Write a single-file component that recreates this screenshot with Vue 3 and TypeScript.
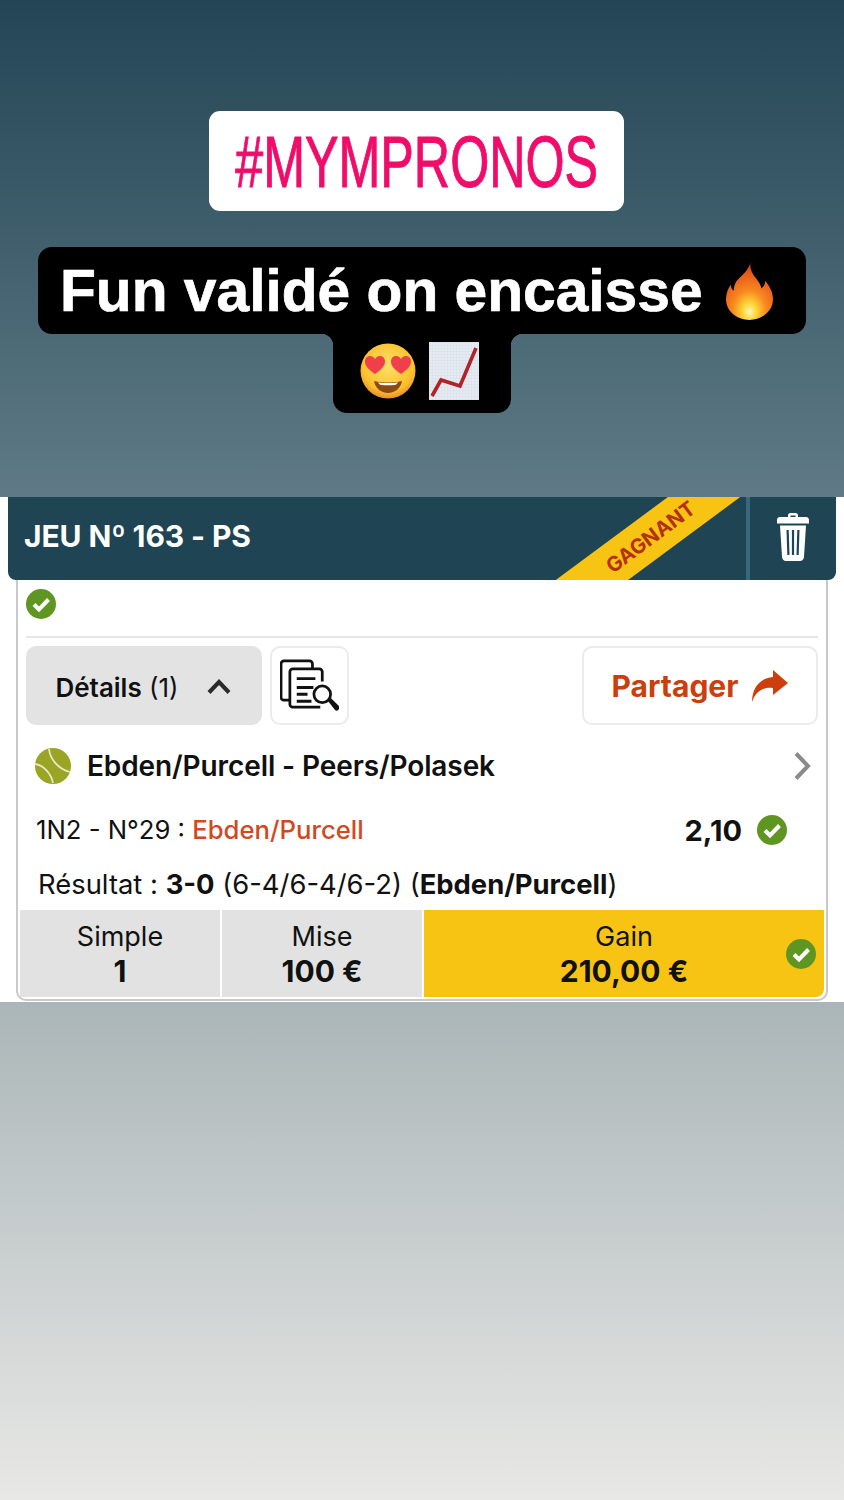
<script setup lang="ts">
const cells = [
  { label: 'Simple', value: '1' },
  { label: 'Mise', value: '100 €' },
]
</script>

<template>
  <div class="page">
    <section class="story">
      <div class="tag"><span class="tag-text">#MYMPRONOS</span></div>
      <div class="caption">
        <div class="line one">
          <span class="caption-text">Fun validé on encaisse</span>
          <svg class="flame" viewBox="0 0 48 60" width="47" height="59" aria-hidden="true">
            <defs>
              <radialGradient id="fl" cx="50%" cy="86%" r="85%">
                <stop offset="0" stop-color="#fff6c0" />
                <stop offset="0.16" stop-color="#ffd93a" />
                <stop offset="0.42" stop-color="#f98a1e" />
                <stop offset="1" stop-color="#d83a1a" />
              </radialGradient>
            </defs>
            <path fill="url(#fl)" d="M25 0c-1 7 1 12 6 18 3 4 5 7 5 10 3-2 4-5 4-8 5 6 8 12 8 19 0 12-11 21-24 21S0 51 0 39c0-6 2-11 5-15 0 3 1 5 3 6 0-4 1-7 3-10 5-6 13-11 14-20z" />
          </svg>
        </div>
        <div class="line two">
          <svg class="face" viewBox="0 0 56 56" width="56" height="56" aria-hidden="true">
            <defs>
              <radialGradient id="fc" cx="50%" cy="40%" r="62%">
                <stop offset="0" stop-color="#ffe169" />
                <stop offset="0.75" stop-color="#fbc02d" />
                <stop offset="1" stop-color="#e8892a" />
              </radialGradient>
            </defs>
            <circle cx="28" cy="28" r="27.500" fill="url(#fc)" />
            <path fill="#ef3f4a" transform="translate(5 13)" d="M10 18C3 13 0 10 0 5.500 0 2.200 2.300 0 5 0c2.200 0 4 1.200 5 3.200C11 1.200 12.800 0 15 0c2.700 0 5 2.200 5 5.500C20 10 17 13 10 18z" />
            <path fill="#ef3f4a" transform="translate(31 13)" d="M10 18C3 13 0 10 0 5.500 0 2.200 2.300 0 5 0c2.200 0 4 1.200 5 3.200C11 1.200 12.800 0 15 0c2.700 0 5 2.200 5 5.500C20 10 17 13 10 18z" />
            <path fill="#8a4a12" d="M14 38c9 2 19 2 28 0-1 7-7 12-14 12s-13-5-14-12z" />
            <path fill="#fff" d="M18 39.500c6 .8 14 .8 20 0-1 1.500-2 2.200-3 2.400-4 .5-10 .5-14 0-1-.2-2-.9-3-2.400z" />
          </svg>
          <svg class="chart" viewBox="0 0 50 58" width="50" height="58" aria-hidden="true">
            <defs>
              <pattern id="gr" width="3" height="3" patternUnits="userSpaceOnUse">
                <rect width="3" height="3" fill="#e6ebf1" />
                <path d="M3 0H0V3" fill="none" stroke="#ced6e0" stroke-width="0.6" />
              </pattern>
            </defs>
            <rect width="50" height="58" fill="url(#gr)" />
            <path fill="none" stroke="#b3212a" stroke-width="3.600" d="M3 54 12 38 31 44 47 6" />
          </svg>
        </div>
      </div>
    </section>

    <section class="sheet">
      <header class="bar">
        <h1 class="bar-title">JEU Nº 163 - PS</h1>
        <div class="ribbon"><span class="ribbon-text">GAGNANT</span></div>
        <div class="bin">
          <svg viewBox="0 0 32 48" width="32" height="48" aria-hidden="true">
            <path fill="#fff" d="M11 4V2.500C11 1 12 0 13.500 0h5C20 0 21 1 21 2.500V4h8c1.700 0 3 1.300 3 3v3.500H0V7c0-1.700 1.300-3 3-3h8zm2.500 0h5V2.500h-5V4z" />
            <path fill="#fff" fill-rule="evenodd" d="M3 12.500h26l-2 31.500c-.1 2.200-1.800 4-4 4H9c-2.200 0-3.900-1.800-4-4L3 12.500zM9.500 17l.8 25h2.200l-.8-25H9.500zm5.400 0v25h2.200V17h-2.200zm5.400 0-.8 25h2.200l.8-25h-2.200z" />
          </svg>
        </div>
      </header>

      <div class="card">
        <div class="status">
          <svg class="ok" viewBox="0 0 30 30" width="30" height="30" aria-hidden="true">
            <circle cx="15" cy="15" r="15" fill="#5f9622" />
            <path d="M8 15.500l5 5 9.500-10" fill="none" stroke="#fff" stroke-width="4" />
          </svg>
        </div>

        <div class="actions">
          <button class="details">
            <span class="details-label"><b>Détails</b> (1)</span>
            <svg viewBox="0 0 24 16" width="24" height="16" aria-hidden="true">
              <path d="M2 14.500 12 4l10 10.500" fill="none" stroke="#2b2b2b" stroke-width="4" />
            </svg>
          </button>
          <button class="docs">
            <svg viewBox="0 0 60 54" width="59" height="53" aria-hidden="true">
              <g fill="none" stroke="#111" stroke-width="2.800">
                <path d="M10 42H4a3 3 0 0 1-3-3V5a3 3 0 0 1 3-3h26a3 3 0 0 1 3 3v5" />
                <path d="M41 49H13a3 3 0 0 1-3-3V13a3 3 0 0 1 3-3h27a3 3 0 0 1 3 3v10" />
                <path d="M17 20h19M17 29h17M17 36h11M17 43h15" stroke-width="3" />
                <circle cx="43" cy="36" r="8.500" />
              </g>
              <path d="M49 43l3-3 8 8c1 1 1 2 0 3-1 2-3 2-4 1z" fill="#111" />
            </svg>
          </button>
          <button class="share">
            <span>Partager</span>
            <svg viewBox="0 0 36 32" width="36" height="32" aria-hidden="true">
              <path fill="#cc3f0c" d="M21 0l15 13-15 12v-7C11 17 4 21 0 32 0 18 8 8 21 7V0z" />
            </svg>
          </button>
        </div>

        <div class="match">
          <svg viewBox="0 0 36 36" width="36" height="36" aria-hidden="true">
            <circle cx="18" cy="18" r="18" fill="#9aa526" />
            <path d="M14 1c1 10 9 20 21 23M0 16c8 1 16 9 18 19" fill="none" stroke="#e6e8c8" stroke-width="1.800" />
          </svg>
          <span class="match-name">Ebden/Purcell - Peers/Polasek</span>
          <svg class="chev" viewBox="0 0 18 30" width="18" height="30" aria-hidden="true">
            <path d="M3 2.500 15 15 3 27.500" fill="none" stroke="#8a8a8a" stroke-width="4" />
          </svg>
        </div>

        <div class="pick">
          <span class="pick-text">1N2 - N°29 : <b>Ebden/Purcell</b></span>
          <span class="odds">2,10</span>
          <svg viewBox="0 0 30 30" width="30" height="30" aria-hidden="true">
            <circle cx="15" cy="15" r="15" fill="#5f9622" />
            <path d="M8 15.500l5 5 9.500-10" fill="none" stroke="#fff" stroke-width="4" />
          </svg>
        </div>

        <p class="result">Résultat : <b>3-0</b> (6-4/6-4/6-2) (<b>Ebden/Purcell</b>)</p>

        <div class="totals">
          <div v-for="c in cells" :key="c.label" class="cell">
            <span>{{ c.label }}</span>
            <b>{{ c.value }}</b>
          </div>
          <div class="cell gain">
            <span>Gain</span>
            <b>210,00 €</b>
            <svg class="gain-ok" viewBox="0 0 30 30" width="30" height="30" aria-hidden="true">
              <circle cx="15" cy="15" r="15" fill="#5f9622" />
              <path d="M8 15.500l5 5 9.500-10" fill="none" stroke="#fff" stroke-width="4" />
            </svg>
          </div>
        </div>
      </div>
    </section>
  </div>
</template>

<style>
html,
body {
  margin: 0;
}
</style>

<style scoped>
.page {
  width: 844px;
  height: 1500px;
  overflow: hidden;
  display: flex;
  flex-direction: column;
  background: linear-gradient(180deg, #234555 0%, #5f7a86 33%, #abb6b8 67%, #e8e8e6 100%);
  font-family: Inter, "Liberation Sans", sans-serif;
  color: #111;
}
.story {
  height: 497px;
  box-sizing: border-box;
  padding-top: 111px;
  display: flex;
  flex-direction: column;
  align-items: center;
  flex: none;
}
.tag {
  width: 415px;
  height: 100px;
  margin-right: 11px;
  background: #fff;
  border-radius: 11px;
  display: flex;
  align-items: center;
  justify-content: center;
}
.tag-text {
  font-family: "Liberation Sans", sans-serif;
  font-size: 73px;
  line-height: 1;
  color: #f00d6a;
  transform: scaleX(0.688);
  white-space: nowrap;
  -webkit-text-stroke: 1px #f00d6a;
}
.caption {
  margin-top: 36px;
  display: flex;
  flex-direction: column;
  align-items: center;
}
.line {
  background: #000;
  color: #fff;
  display: flex;
  align-items: center;
  font-family: "Liberation Sans", sans-serif;
  font-weight: 700;
}
.one {
  width: 768px;
  height: 87px;
  box-sizing: border-box;
  border-radius: 14px;
  padding-left: 22px;
  font-size: 58.700px;
  gap: 23px;
  white-space: nowrap;
}
.caption-text {
  -webkit-text-stroke: 0.7px #fff;
}
.two {
  width: 178px;
  height: 79px;
  box-sizing: border-box;
  border-radius: 0 0 14px 14px;
  justify-content: center;
  gap: 13px;
  padding: 0 5px 6px 0;
  position: relative;
}
.two::before,
.two::after {
  content: "";
  position: absolute;
  top: 0;
  width: 12px;
  height: 12px;
}
.two::before {
  left: -12px;
  background: radial-gradient(circle at 0 100%, transparent 12px, #000 12.500px);
}
.two::after {
  right: -12px;
  background: radial-gradient(circle at 100% 100%, transparent 12px, #000 12.500px);
}
.sheet {
  height: 505px;
  flex: none;
  background: #fff;
  box-sizing: border-box;
  padding: 0 8px;
}
.bar {
  height: 83px;
  background: #1f4454;
  border-radius: 0 0 8px 8px;
  position: relative;
  overflow: hidden;
  display: flex;
  align-items: center;
  justify-content: space-between;
  color: #fff;
}
.bar-title {
  margin: 0 0 5px 16px;
  font-size: 30px;
  font-weight: 700;
  letter-spacing: -0.1px;
}
.ribbon {
  position: absolute;
  left: 520px;
  top: 20px;
  width: 240px;
  height: 43px;
  background: #f8c413;
  transform: rotate(-36.500deg);
  display: flex;
  align-items: center;
  justify-content: center;
  padding: 0 0 0 6px;
  box-sizing: border-box;
}
.ribbon-text {
  color: #b5300f;
  font-size: 20.500px;
  line-height: 24px;
  font-weight: 700;
}
.bin {
  width: 90px;
  height: 100%;
  box-sizing: border-box;
  border-left: 4px solid #39687e;
  padding-bottom: 4px;
  display: flex;
  align-items: center;
  justify-content: center;
  position: relative;
}
.card {
  margin: 0 8px;
  height: 421px;
  box-sizing: border-box;
  border: 2px solid #c9c9c9;
  border-top: 0;
  border-radius: 0 0 10px 10px;
  padding: 0 2px;
  display: flex;
  flex-direction: column;
}
.status {
  height: 58px;
  margin: 0 6px;
  box-sizing: border-box;
  border-bottom: 2px solid #e5e5e5;
  display: flex;
  align-items: center;
  padding-bottom: 8px;
}
.actions {
  margin: 8px 6px 0;
  height: 79px;
  display: flex;
  gap: 8px;
}
button {
  font: inherit;
  color: inherit;
  padding: 0;
  box-sizing: border-box;
  display: flex;
  align-items: center;
  justify-content: center;
  border-radius: 10px;
  background: #fff;
  border: 2px solid #ebebeb;
}
.details {
  width: 236px;
  background: #e3e3e3;
  border: 0;
  font-size: 26px;
  gap: 28px;
  padding-right: 2px;
}
.details-label {
  padding-top: 3px;
}
.details b {
  font-weight: 600;
}
.docs {
  width: 79px;
}
.share {
  width: 236px;
  margin-left: auto;
  gap: 14px;
  color: #cc3f0c;
  font-size: 30px;
  font-weight: 700;
}
.match {
  height: 82px;
  display: flex;
  align-items: center;
  margin: 0 0 0 15px;
}
.match-name {
  margin-left: 16px;
  font-size: 28px;
  font-weight: 600;
  letter-spacing: -0.1px;
}
.chev {
  margin-left: auto;
  margin-right: 13px;
}
.pick {
  height: 46px;
  display: flex;
  align-items: center;
  margin-left: 16px;
}
.pick-text {
  font-size: 25.700px;
  margin-bottom: 1px;
}
.pick-text b {
  font-weight: 500;
  color: #cf4a22;
}
.odds {
  margin-left: auto;
  font-size: 29px;
  font-weight: 700;
}
.pick svg {
  margin: 0 37px 0 15px;
}
.result {
  margin: 0 0 0 18px;
  height: 57px;
  line-height: 62px;
  font-size: 27.400px;
  white-space: nowrap;
}
.result b {
  font-weight: 700;
}
.totals {
  display: grid;
  grid-template-columns: 200px 200px 1fr;
  gap: 2px;
  height: 87px;
}
.cell {
  background: #e2e2e2;
  display: flex;
  flex-direction: column;
  align-items: center;
  justify-content: center;
  font-size: 27px;
  line-height: 35px;
  position: relative;
}
.cell b {
  font-size: 30px;
  font-weight: 700;
}
.gain {
  background: #f8c413;
  border-radius: 0 0 8px 0;
}
.gain-ok {
  position: absolute;
  right: 8px;
  top: 29px;
}
</style>
